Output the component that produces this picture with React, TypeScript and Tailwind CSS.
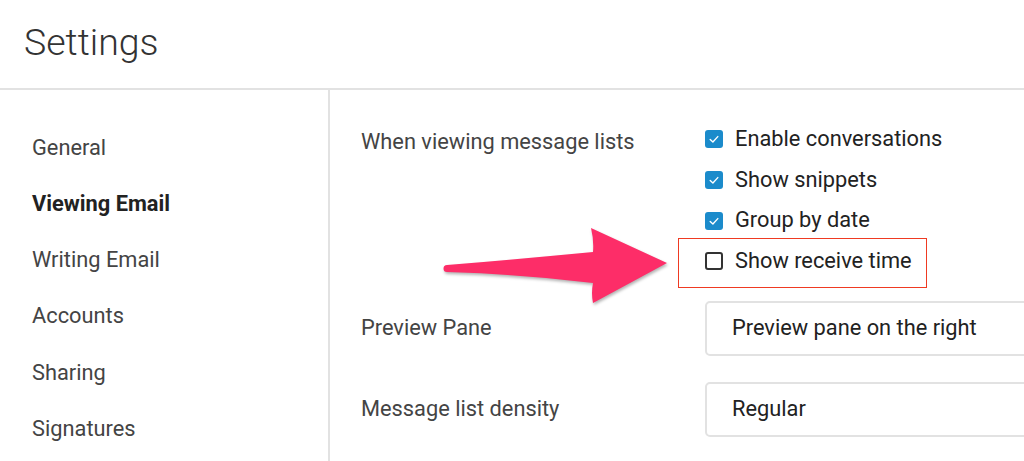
import React from "react";

const font = { fontFamily: "Roboto, 'Liberation Sans', sans-serif" };

const navItems = [
  { label: "General", active: false },
  { label: "Viewing Email", active: true },
  { label: "Writing Email", active: false },
  { label: "Accounts", active: false },
  { label: "Sharing", active: false },
  { label: "Signatures", active: false },
];

const options = [
  { label: "Enable conversations", checked: true },
  { label: "Show snippets", checked: true },
  { label: "Group by date", checked: true },
  { label: "Show receive time", checked: false },
];

const Checkbox = ({ checked }: { checked: boolean }) =>
  checked ? (
    <div className="w-[18px] h-[18px] rounded-[3px] bg-[#1b8bcb] flex items-center justify-center shrink-0">
      <svg width="18" height="18" viewBox="0 0 18 18" fill="none">
        <path d="M5.2 9.4 L7.9 12 L12.8 6.6" stroke="white" strokeWidth="1.4" strokeLinecap="round" strokeLinejoin="round" />
      </svg>
    </div>
  ) : (
    <div className="w-[18px] h-[18px] rounded-[3px] border-2 border-[#333] bg-white shrink-0" />
  );

const Arrow = () => (
  <svg
    className="absolute left-[440px] top-[222px] pointer-events-none"
    width="240"
    height="90"
    viewBox="440 222 240 90"
    style={{ filter: "drop-shadow(1px 2px 1.5px rgba(0,0,0,0.3))" }}
  >
    <path
      d="M447,265 Q520,259 593,252 Q594,240 591,228 L667,263 L593,303 Q591,293 593,283 Q520,274 447,272 A3.5,3.5 0 0 1 447,265 Z"
      fill="#fd2d68"
    />
  </svg>
);

const App = () => {
  return (
    <div className="relative w-[1024px] h-[461px] bg-white overflow-hidden text-[#333]" style={font}>
      <header className="h-[90px] border-b-2 border-[#e2e2e2] flex items-center pl-[24px]">
        <h1 className="text-[37.5px] font-light text-[#333] leading-none -mt-[3px]">Settings</h1>
      </header>

      <div className="flex h-[371px]">
        <nav className="w-[330px] border-r-2 border-[#e2e2e2] pt-[30px] pl-[32px] shrink-0">
          {navItems.map((item) => (
            <div
              key={item.label}
              className={`h-[56.2px] flex items-center text-[21.8px] ${
                item.active ? "font-bold text-[#222]" : "text-[#444]"
              }`}
            >
              {item.label}
            </div>
          ))}
        </nav>

        <main className="flex-1 pl-[31px] pt-[29px]">
          <div className="flex">
            <div className="w-[344px] text-[21.8px] text-[#444] pt-[11px] leading-[24px]">
              When viewing message lists
            </div>
            <div className="flex flex-col">
              {options.map((o) => (
                <label key={o.label} className="h-[40.7px] flex items-center gap-[12px] text-[21.8px] text-[#222]">
                  <Checkbox checked={o.checked} />
                  <span>{o.label}</span>
                </label>
              ))}
            </div>
          </div>

          <div className="flex items-center mt-[19px]">
            <div className="w-[344px] text-[21.8px] text-[#444]">Preview Pane</div>
            <div className="w-[360px] h-[55px] border-2 border-[#e2e2e2] rounded-[5px] flex items-center pl-[25px] text-[21.8px] text-[#222]">
              Preview pane on the right
            </div>
          </div>

          <div className="flex items-center mt-[26px]">
            <div className="w-[344px] text-[21.8px] text-[#444]">Message list density</div>
            <div className="w-[360px] h-[55px] border-2 border-[#e2e2e2] rounded-[5px] flex items-center pl-[25px] text-[21.8px] text-[#222]">
              Regular
            </div>
          </div>
        </main>
      </div>

      <div className="absolute left-[678px] top-[238px] w-[249px] h-[50px] border-[1.5px] border-[#ef3a22] pointer-events-none" />
      <Arrow />
    </div>
  );
};

export default App;
